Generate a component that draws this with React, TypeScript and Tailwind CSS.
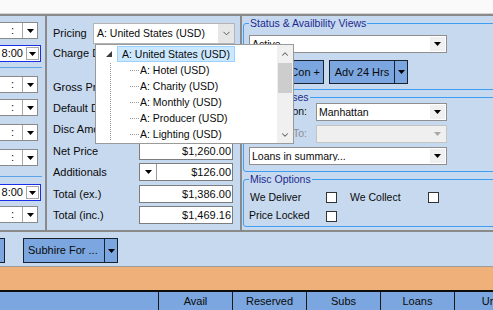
import { ChevronDown, ChevronUp } from 'lucide-react';

function Tri({ color = '#000' }: { color?: string }) {
  return (
    <svg width="7" height="4" viewBox="0 0 7 4">
      <polygon points="0,0 7,0 3.5,4" fill={color} />
    </svg>
  );
}

function TimeField({ value, active }: { value: string; active?: boolean }) {
  if (active) {
    return (
      <div className="-ml-[12px] w-[53px] h-[17px] shrink-0 flex bg-white border border-[#1a2fe6]">
        <div className="flex-1 flex items-center justify-end pr-[3px] leading-none">{value}</div>
        <div className="w-[13px] my-px mr-px flex items-center justify-center border border-[#a6a6a6] bg-white">
          <Tri />
        </div>
      </div>
    );
  }
  return (
    <div className="-ml-[12px] w-[50px] h-[17px] shrink-0 flex bg-white border border-[#8a8a8a]">
      <div className="flex-1 flex items-center justify-end pr-[8px] leading-none">{value}</div>
      <div className="w-[15px] flex items-center justify-center border-l border-[#a6a6a6] bg-white">
        <Tri />
      </div>
    </div>
  );
}

function ValueField({ value, withButton }: { value?: string; withButton?: boolean }) {
  return (
    <div className="w-[94px] h-full flex bg-white border border-[#7d7d7d]">
      {withButton && (
        <div className="w-[17px] flex items-center justify-center border-r border-[#9a9a9a]">
          <Tri />
        </div>
      )}
      <div className="flex-1 flex items-center justify-end pr-px leading-none">{value}</div>
    </div>
  );
}

function Combo({ text, width, disabled }: { text?: string; width: string; disabled?: boolean }) {
  return (
    <div
      className={`${width} h-full flex items-center border ${
        disabled ? 'bg-[#efefef] border-[#c4c4c4]' : 'bg-white border-[#8f8f8f]'
      }`}
    >
      <div className="flex-1 pl-[2px] leading-none whitespace-nowrap overflow-hidden">{text}</div>
      <div className={`w-[15px] h-[14px] mr-px flex items-center justify-center ${disabled ? '' : 'bg-[#f0f0f0]'}`}>
        <Tri color={disabled ? '#a8a8a8' : '#000'} />
      </div>
    </div>
  );
}

const midRows = [
  { label: 'Gross Price', mt: 'mt-[16px]' },
  { label: 'Default Disc %', mt: 'mt-[3px]' },
  { label: 'Disc Amount', mt: 'mt-[3px]' },
  { label: 'Net Price', mt: 'mt-[4px]', value: '$1,260.00' },
  { label: 'Additionals', mt: 'mt-[3px]', value: '$126.00', button: true },
  { label: 'Total (ex.)', mt: 'mt-[4px]', value: '$1,386.00' },
  { label: 'Total (inc.)', mt: 'mt-[3px]', value: '$1,469.16' },
];

const treeChildren = ['A: Hotel (USD)', 'A: Charity (USD)', 'A: Monthly (USD)', 'A: Producer (USD)', 'A: Lighting (USD)'];

const columns = ['Avail', 'Reserved', 'Subs', 'Loans', 'Unit'];

export default function App() {
  return (
    <div className="w-[493px] h-[310px] overflow-hidden relative flex flex-col bg-[#c7d9ef] font-['Liberation_Sans',Arial,sans-serif] text-[11px] text-[#0a0a0a]">
      <div className="h-[13px] shrink-0 bg-[#fafafa]" />
      <div className="h-px shrink-0 bg-[#d4d4d4]" />
      <div className="h-[2px] shrink-0 bg-[#8a8a8a]" />

      {/* main panels */}
      <div className="h-[214px] shrink-0 flex">
        <div className="w-[47px] shrink-0 border-r-2 border-[#8a8a8a] flex flex-col">
          <div className="mt-[6px]"><TimeField value=":" /></div>
          <div className="mt-[6px]"><TimeField value="8:00" active /></div>
          <div className="mt-[5px] h-px w-[42px] bg-[#5ea3e8]" />
          <div className="mt-[8px]"><TimeField value=":" /></div>
          <div className="mt-[6px]"><TimeField value=":" /></div>
          <div className="mt-[8px]"><TimeField value=":" /></div>
          <div className="mt-[8px]"><TimeField value=":" /></div>
          <div className="mt-[10px] h-px w-[42px] bg-[#5ea3e8]" />
          <div className="mt-[7px]"><TimeField value="8:00" active /></div>
          <div className="mt-[5px]"><TimeField value=":" /></div>
        </div>

        <div className="w-[195px] shrink-0 border-r-2 border-[#8a8a8a] flex flex-col pl-[6px]">
          <div className="mt-[7px] h-[21px] flex items-center">
            <div className="w-[40px] shrink-0">Pricing</div>
            <div className="w-[142px] h-full flex items-center bg-white border border-[#b4b4b4] text-[10.5px]">
              <div className="flex-1 pl-[3px] leading-none whitespace-nowrap">A: United States (USD)</div>
              <div className="w-[16px] h-[19px] flex items-center justify-center bg-[#e6e6e6]">
                <ChevronDown size={11} strokeWidth={2} color="#505050" />
              </div>
            </div>
          </div>
          <div className="h-[18px] flex items-center">
            <div className="w-[86px] shrink-0 whitespace-nowrap">Charge Days</div>
            <ValueField />
          </div>
          {midRows.map((r) => (
            <div key={r.label} className={`${r.mt} h-[18px] flex items-center`}>
              <div className="w-[86px] shrink-0 whitespace-nowrap">{r.label}</div>
              <ValueField value={r.value} withButton={r.button} />
            </div>
          ))}
        </div>

        <div className="flex-1 overflow-hidden text-[10.5px]">
          <fieldset className="mt-px ml-px w-[270px] border border-[#3f9ef2] rounded-[3px] px-[5px] pb-[5px]">
            <legend className="px-px leading-[12px] text-[#1c2a8e]">Status &amp; Availbility Views</legend>
            <div className="mt-[6px] h-[18px]"><Combo text="Active" width="w-[198px]" /></div>
            <div className="mt-[7px] h-[24px] flex gap-[5px]">
              <div className="w-[75px] flex items-center justify-end pr-[3px] bg-[#7ba6df] border border-[#18222f] text-[11px]">Sub Con +</div>
              <div className="w-[79px] flex bg-[#7ba6df] border border-[#18222f] text-[11px]">
                <div className="flex-1 flex items-center justify-center">Adv 24 Hrs</div>
                <div className="w-[13px] flex items-center justify-center border-l border-[#18222f]"><Tri /></div>
              </div>
            </div>
          </fieldset>

          <fieldset className="mt-px ml-px w-[270px] border border-[#3f9ef2] rounded-[3px] px-[5px] pb-[6px]">
            <legend className="px-px leading-[12px] text-[#1c2a8e]">Warehouses</legend>
            <div className="h-[18px] flex items-center">
              <div className="w-[58px] text-right">Location:</div>
              <div className="ml-[9px] h-full"><Combo text="Manhattan" width="w-[131px]" /></div>
            </div>
            <div className="mt-[4px] h-[18px] flex items-center">
              <div className="w-[58px] text-right text-[#8c8c8c]">Return To:</div>
              <div className="ml-[9px] h-full"><Combo width="w-[131px]" disabled /></div>
            </div>
            <div className="mt-[4px] h-[18px]"><Combo text="Loans in summary..." width="w-[198px]" /></div>
          </fieldset>

          <fieldset className="mt-px ml-px w-[270px] border border-[#3f9ef2] rounded-[3px] px-[5px] pb-px">
            <legend className="px-px leading-[12px] text-[#1c2a8e]">Misc Options</legend>
            <div className="mt-[3px] h-[19px] flex items-center">
              <div className="w-[77px] pl-px">We Deliver</div>
              <div className="w-[11px] h-[11px] bg-white border border-[#333]" />
              <div className="ml-[13px] w-[78px]">We Collect</div>
              <div className="w-[11px] h-[11px] bg-white border border-[#333]" />
            </div>
            <div className="h-[18px] flex items-center">
              <div className="w-[77px]">Price Locked</div>
              <div className="w-[11px] h-[11px] bg-white border border-[#333]" />
            </div>
          </fieldset>
        </div>
      </div>
      <div className="h-[2px] shrink-0 bg-[#8a8a8a]" />

      {/* toolbar */}
      <div className="h-[34px] shrink-0 flex pt-[6px]">
        <div className="-ml-[50px] w-[55px] h-[25px] bg-[#7ba6df] border border-[#18222f]" />
        <div className="ml-[18px] w-[95px] h-[25px] flex bg-[#7ba6df] border border-[#18222f]">
          <div className="flex-1 flex items-center pl-[4px]">Subhire For ...</div>
          <div className="w-[13px] flex items-center justify-center border-l border-[#18222f]"><Tri /></div>
        </div>
      </div>
      <div className="h-px shrink-0 bg-[#9c9c9c]" />
      <div className="h-[23px] shrink-0 bg-[#f0b07a]" />
      <div className="h-[2px] shrink-0 bg-[#0c0c0c]" />
      <div className="flex-1 flex bg-[#7ba6df]">
        <div className="w-[159px] shrink-0 border-r border-[#1a1a1a]" />
        {columns.map((c) => (
          <div key={c} className="w-[74px] shrink-0 border-r border-[#1a1a1a] flex items-center justify-center leading-none">
            {c}
          </div>
        ))}
      </div>

      {/* pricing dropdown popup */}
      <div className="absolute left-[95px] top-[44px] w-[199px] h-[100px] bg-white border border-[#9a9a9a] text-[10.5px]">
        <svg className="absolute left-0 top-0" width="180" height="98">
          <polygon points="16,6 16,12 10,12" fill="#3c3c3c" />
          <line x1="14.5" y1="18" x2="14.5" y2="96" stroke="#9a9a9a" strokeDasharray="1 1" />
          {treeChildren.map((c, i) => (
            <line key={c} x1="34" y1={25.5 + i * 16} x2="43" y2={25.5 + i * 16} stroke="#9a9a9a" strokeDasharray="1 1" />
          ))}
        </svg>
        <div className="relative flex flex-col">
          <div className="mt-px ml-[21px] w-[118px] h-[16px] flex items-center pl-[4px] bg-[#cce8ff] border border-[#99d1ff] leading-none whitespace-nowrap">
            A: United States (USD)
          </div>
          {treeChildren.map((c) => (
            <div key={c} className="ml-[44px] h-[16px] flex items-center leading-none whitespace-nowrap">
              {c}
            </div>
          ))}
        </div>
        <div className="absolute right-0 top-0 bottom-0 w-[16px] flex flex-col bg-[#f0f0f0]">
          <div className="h-[17px] flex items-center justify-center">
            <ChevronUp size={10} strokeWidth={2.5} color="#606060" />
          </div>
          <div className="mt-px mx-px h-[30px] bg-[#cdcdcd]" />
          <div className="flex-1" />
          <div className="h-[17px] flex items-center justify-center">
            <ChevronDown size={10} strokeWidth={2.5} color="#606060" />
          </div>
        </div>
      </div>
    </div>
  );
}
